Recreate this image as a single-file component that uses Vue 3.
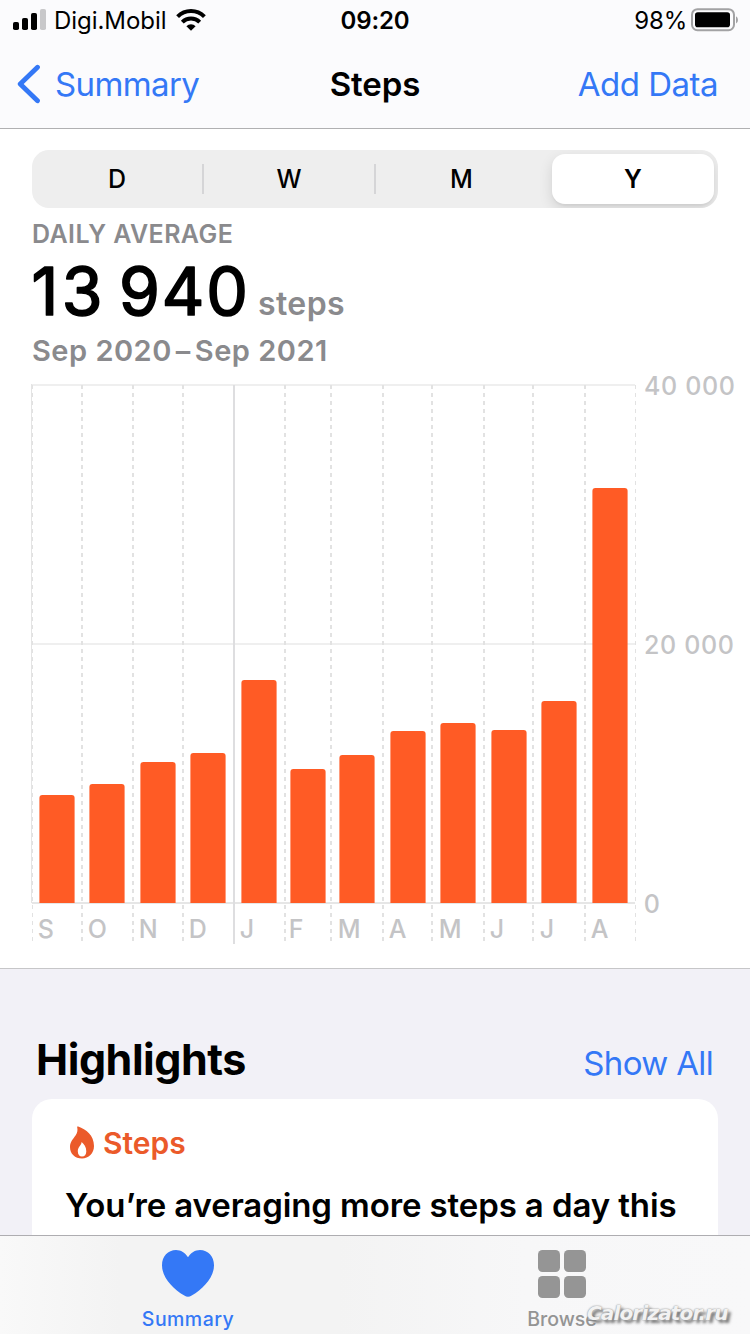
<script setup>
const ranges = ['D', 'W', 'M', 'Y']
const selected = 'Y'

const baseline = 903
const months = [
  { label: 'S', x: 39, top: 795 },
  { label: 'O', x: 89, top: 784 },
  { label: 'N', x: 140, top: 762 },
  { label: 'D', x: 190, top: 753 },
  { label: 'J', x: 241, top: 680 },
  { label: 'F', x: 290, top: 769 },
  { label: 'M', x: 339, top: 755 },
  { label: 'A', x: 390, top: 731 },
  { label: 'M', x: 440, top: 723 },
  { label: 'J', x: 491, top: 730 },
  { label: 'J', x: 541, top: 701 },
  { label: 'A', x: 592, top: 488 },
]
const dashed = [82, 133, 183, 285, 331, 383, 432, 484, 533, 585]
const barPath = (m) =>
  `M${m.x + 0.4} ${baseline}V${m.top + 3}q0-3 3-3h29.2q3 0 3 3V${baseline}z`
</script>

<template>
  <div class="screen">
    <header class="top">
      <div class="status">
        <div class="carrier">
          <svg class="signal" width="34" height="22" viewBox="0 0 34 22">
            <rect x="0" y="13" width="6" height="8" rx="1.8" />
            <rect x="9" y="9" width="6" height="12" rx="1.8" />
            <rect x="18" y="4" width="6" height="17" rx="1.8" />
            <rect x="27" y="0" width="6" height="21" rx="1.8" fill="#c8c8ca" />
          </svg>
          <span class="carrier-name">Digi.Mobil</span>
          <svg class="wifi" width="30" height="22" viewBox="0 0 30 22">
            <g fill="none" stroke="#000" stroke-width="4">
              <path d="M1.6 7.6a19 19 0 0 1 26.8 0" />
              <path d="M6.3 13.1a12.4 12.4 0 0 1 17.4 0" />
            </g>
            <path d="M15 21.8l-4.6-4.5a6.4 6.4 0 0 1 9.2 0z" />
          </svg>
        </div>
        <div class="clock">09:20</div>
        <div class="power">
          <span class="percent">98%</span>
          <svg width="48" height="24" viewBox="0 0 48 24">
            <rect x="1" y="1.2" width="42" height="21" rx="5.5" fill="none" stroke="#a2a2a4" stroke-width="2" />
            <rect x="4" y="4.2" width="35" height="15" rx="2.8" />
            <path d="M45 8.2q2 1 2 3.7t-2 3.7z" fill="#a2a2a4" />
          </svg>
        </div>
      </div>
      <nav class="nav">
        <a class="back">
          <svg width="24" height="40" viewBox="0 0 24 40">
            <path d="M20.5 3.2L3.2 20L20.5 36.8" fill="none" stroke="#3478f6" stroke-width="4.8" stroke-linecap="round" stroke-linejoin="round" />
          </svg>
          <span class="back-label">Summary</span>
        </a>
        <h1 class="title">Steps</h1>
        <a class="add">Add Data</a>
      </nav>
    </header>

    <section class="data">
      <div class="segments">
        <div v-for="r in ranges" :key="r" class="segment" :class="{ on: r === selected }">
          <span>{{ r }}</span>
        </div>
      </div>
      <div class="caption">DAILY AVERAGE</div>
      <div class="total">
        <svg class="number" width="218" height="72" viewBox="32 255 218 72">
          <text x="31.5" y="315" textLength="71">13</text>
          <text x="119" y="315" textLength="129">940</text>
        </svg>
        <span class="unit">steps</span>
      </div>
      <div class="period">Sep 2020<span class="dash">–</span>Sep 2021</div>

      <svg class="chart" width="750" height="580" viewBox="0 374 750 580">
        <g fill="#efefef">
          <rect x="32" y="384" width="603" height="2" />
          <rect x="32" y="643" width="603" height="2" />
          <rect x="32" y="902" width="603" height="2" fill="#e6e6e6" />
        </g>
        <rect x="31" y="384" width="1" height="519" fill="#e4e4e4" />
        <g stroke="#e2e2e2" stroke-dasharray="4 4">
          <path d="M32.5 385V941M635.5 385V941" />
          <path v-for="x in dashed" :key="x" :d="`M${x} 385V941`" stroke-width="2" />
        </g>
        <rect x="233" y="385" width="2" height="559" fill="#dedee0" />
        <path v-for="m in months" :key="'b' + m.x" :d="barPath(m)" fill="#ff5b25" />
        <g class="axis">
          <text v-for="m in months" :key="'l' + m.x" :x="m.x - 1.2" y="938">{{ m.label }}</text>
          <text x="644" y="395" textLength="91">40 000</text>
          <text x="644" y="654" textLength="90">20 000</text>
          <text x="643.7" y="913">0</text>
        </g>
      </svg>
    </section>

    <section class="highlights">
      <div class="heading">
        <h2>Highlights</h2>
        <a class="all">Show All</a>
      </div>
      <article class="card">
        <div class="card-title">
          <svg width="26" height="34" viewBox="0 0 26 34">
            <path fill="#eb5a2a" fill-rule="evenodd" d="M8.2 1.2C7.9 .7 8.4.3 9.2.6C17 3.2 25 9.5 25 20C25 27.5 19.5 32.5 13 32.5C6 32.5 1 27.8 1 21C1 15.5 4.2 13 6.7 9.2C8.5 6.4 8.8 4 8.2 1.2ZM12.6 16C12.5 19.2 8.8 20.8 8.8 25.3C8.8 28.8 10.6 30.6 13 30.6C15.6 30.6 17.3 28.6 17.3 25.2C17.3 21 15 18 12.6 16Z" />
          </svg>
          <span>Steps</span>
        </div>
        <p class="message">You’re averaging more steps a day this</p>
      </article>
    </section>

    <footer class="tabs">
      <a class="tab active">
        <svg width="52" height="48" viewBox="0 0 52 48">
          <path fill="#3478f6" d="M26 7.2C23.3 2.8 18.8 0 14 0C6 0 0 6.4 0 15.2C0 27.5 10.5 38.5 22.3 45.6C25 47.2 27 47.2 29.7 45.6C41.5 38.5 52 27.5 52 15.2C52 6.4 46 0 38 0C33.2 0 28.7 2.8 26 7.2Z" />
        </svg>
        <span>Summary</span>
      </a>
      <a class="tab">
        <svg width="48" height="48" viewBox="0 0 48 48" fill="#959595">
          <rect width="22" height="22" rx="4.5" />
          <rect x="26" width="22" height="22" rx="4.5" />
          <rect y="26" width="22" height="22" rx="4.5" />
          <rect x="26" y="26" width="22" height="22" rx="4.5" />
        </svg>
        <span>Browse</span>
      </a>
      <div class="watermark">Calorizator.ru</div>
    </footer>
  </div>
</template>

<style>
body { margin: 0; overflow: hidden; }
</style>

<style scoped>
.screen {
  width: 750px;
  height: 1334px;
  display: flex;
  flex-direction: column;
  overflow: hidden;
  background: #fff;
  color: #000;
  font-family: Inter, "Liberation Sans", sans-serif;
  white-space: nowrap;
}
svg { display: block; flex: none; }
h1, h2, p { margin: 0; }
.top { height: 128px; flex: none; background: #fbfbfd; border-bottom: 1px solid #b0b0b2; }
.status { height: 40px; display: grid; grid-template-columns: 1fr auto 1fr; font-size: 24px; line-height: 42px; }
.carrier { display: flex; padding-left: 13px; }
.signal { margin-top: 9px; }
.carrier-name { width: 114px; margin-left: 7px; letter-spacing: -0.05px; }
.wifi { margin: 9px 0 0 8px; }
.clock { font-weight: 600; letter-spacing: -0.1px; }
.power { display: flex; justify-content: flex-end; padding-right: 11px; }
.power svg { margin-top: 8px; }
.percent { margin-right: 4px; letter-spacing: -0.2px; }
.nav { height: 88px; display: grid; grid-template-columns: 1fr auto 1fr; font-size: 33px; line-height: 88px; color: #3478f6; }
.back { display: flex; align-items: center; padding-left: 17px; }
.back-label { margin-left: 14px; letter-spacing: -0.6px; }
.title { font-size: 33px; font-weight: 600; color: #000; letter-spacing: -0.1px; }
.add { text-align: right; padding-right: 32px; letter-spacing: -0.5px; }

.data { height: 839px; flex: none; border-bottom: 1px solid #c6c6c8; }
.segments { height: 58px; margin: 21px 32px 0; box-sizing: border-box; display: grid; grid-template-columns: 168px 172px 176px 162px; padding: 4px; border-radius: 17px; background: #eeeeee; overflow: hidden; }
.segment { display: flex; align-items: center; justify-content: center; font-size: 25px; font-weight: 500; }
.segment:nth-child(-n + 2) { border-right: 2px solid #d5d5d7; margin: 10px 0; }
.segment:nth-child(1) { margin-left: -4px; }
.segment:nth-child(3) { padding-right: 5px; }
.segment.on { background: #fff; border-radius: 13px; font-weight: 600; box-shadow: 0 5px 14px rgba(0, 0, 0, 0.12), 0 2px 2px rgba(0, 0, 0, 0.04); }
.caption { height: 46px; padding-left: 32px; margin-top: 3px; font-size: 25px; font-weight: 600; line-height: 47px; color: #8a8a8d; letter-spacing: 0.42px; }
.total { display: flex; height: 72px; margin-left: 32px; margin-top: -2px; }
.number { overflow: visible; }
.number text { font-size: 66px; line-height: 70px; font-weight: 400; stroke: #000; stroke-width: 1.7; stroke-linejoin: round; }
.unit { margin-left: 8px; font-size: 32px; font-weight: 600; color: #8a8a8d; line-height: 97px; letter-spacing: 0.4px; }
.period { height: 47px; padding-left: 32px; font-size: 29px; font-weight: 600; line-height: 47px; color: #8a8a8d; letter-spacing: 0.5px; }
.dash { margin: 0 4px; }
.chart { overflow: visible; }
.axis { font-size: 25px; font-weight: 500; fill: #c4c4c6; }

.highlights { flex: 1; background: #f2f1f7; overflow: hidden; }
.heading { display: flex; justify-content: space-between; height: 130px; padding: 0 37px 0 36px; }
h2 { font-size: 43px; font-weight: 700; line-height: 181px; letter-spacing: -0.45px; }
.all { font-size: 33px; line-height: 189px; color: #3478f6; letter-spacing: -0.65px; }
.card { height: 260px; margin: 0 32px; border-radius: 20px; background: #fff; }
.card-title { display: flex; padding: 27px 0 0 37px; font-size: 30px; font-weight: 600; line-height: 35px; color: #eb5a2a; }
.card-title span { margin-left: 8px; }
.message { padding-left: 33px; margin-top: 24px; font-size: 33px; font-weight: 600; line-height: 40px; letter-spacing: -0.11px; }

.tabs { position: relative; height: 98px; flex: none; display: grid; grid-template-columns: 376px 372px; border-top: 1px solid #aeadb1; background: linear-gradient(90deg, #f9f9f9, #f3f3f3 16%, #f3f3f3 45%, #f7f7f8 70%, #f8f8f9); }
.tab { display: flex; flex-direction: column; align-items: center; padding-top: 14px; font-size: 19.5px; font-weight: 500; line-height: 24px; color: #949494; }
.tab span { margin-top: 9px; }
.tab.active { color: #3478f6; }
.tab.active span { letter-spacing: 0.45px; }
.watermark { position: absolute; left: 587px; top: 64px; font: italic bold 20px/26px "DejaVu Sans", sans-serif; letter-spacing: -0.85px; color: #f2f2f2; text-shadow: 0 0 2px #999, 0 0 1px #aaa, 3px 3px 3px #777; }
</style>
